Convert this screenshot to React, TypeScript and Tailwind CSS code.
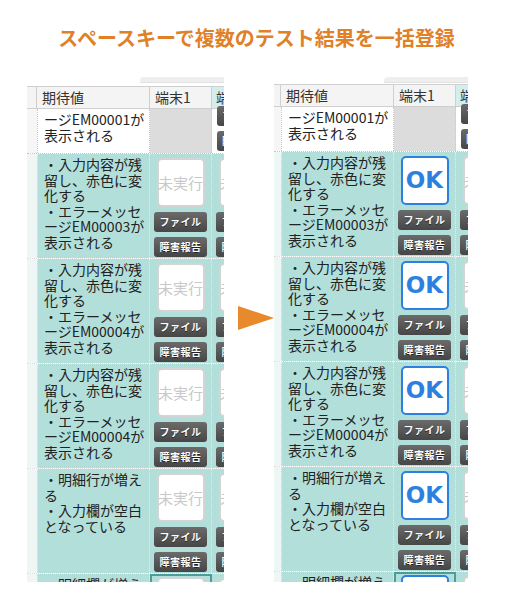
import React from "react";

const rows: string[][] = [
  ["・入力内容が残", "留し、赤色に変", "化する", "・エラーメッセ", "ージEM00003が", "表示される"],
  ["・入力内容が残", "留し、赤色に変", "化する", "・エラーメッセ", "ージEM00004が", "表示される"],
  ["・入力内容が残", "留し、赤色に変", "化する", "・エラーメッセ", "ージEM00004が", "表示される"],
  ["・明細行が増え", "る", "・入力欄が空白", "となっている"],
];

function Btn({ children }: { children: React.ReactNode }) {
  return (
    <div className="w-[53px] h-[20px] shrink-0 rounded-[3px] bg-linear-to-b from-[#6b6b6b] to-[#464646] text-white text-[10px] font-bold flex items-center justify-center leading-none tracking-[0.5px] [text-shadow:0_1px_0_#222]">
      {children}
    </div>
  );
}

function Pending() {
  return (
    <div className="w-[48px] h-[49px] shrink-0 bg-white border-2 border-[#d4d4d4] rounded-[5px] flex items-center justify-center whitespace-nowrap text-[15px] text-[#c9c9c9] leading-none">
      未実行
    </div>
  );
}

function OkBox() {
  return (
    <div className="w-[48px] h-[49px] shrink-0 bg-white border-2 border-[#2d80e0] rounded-[5px] flex items-center justify-center text-[23px] font-bold text-[#2d80e0] leading-none font-['DejaVu_Sans',sans-serif]">
      OK
    </div>
  );
}

function TermCell({ ok }: { ok: boolean }) {
  return (
    <div className="w-[62px] shrink-0 flex flex-col items-center pt-[4px] gap-[5px] border-r border-dotted border-[#e4eeee]">
      {ok ? <OkBox /> : <Pending />}
      <Btn>ファイル</Btn>
      <Btn>障害報告</Btn>
    </div>
  );
}

function Table({ ok }: { ok: boolean }) {
  const narrow = ok ? "w-[7px] shrink-0" : "w-[10px] shrink-0";
  return (
    <div className={ok ? "w-[194px] h-[505px] overflow-hidden shrink-0" : "w-[197px] h-[505px] overflow-hidden shrink-0"}>
      <div className="w-[260px] font-['Noto_Sans_CJK_JP','Noto_Sans',sans-serif]">
        <div className={ok ? "ml-[110px] h-[6px] rounded-tl-[4px] bg-[#eeeeee] border-b border-[#e2e2e2]" : "ml-[113px] h-[6px] rounded-tl-[4px] bg-[#eeeeee] border-b border-[#e2e2e2]"} />
        {/* header */}
        <div className={ok ? "mt-[1px] flex h-[23px] border-y border-[#cfcfcf] bg-[#f4f4f4] text-[14px] text-[#333] leading-[21px]" : "mt-[3px] flex h-[23px] border-y border-[#cfcfcf] bg-[#f4f4f4] text-[14px] text-[#333] leading-[21px]"}>
          <div className={narrow + " border-r border-[#cfcfcf]"} />
          <div className="w-[113px] shrink-0 border-r border-[#cfcfcf] pl-[5px]">期待値</div>
          <div className="w-[62px] shrink-0 border-r border-[#cfcfcf] pl-[5px]">端末1</div>
          <div className="w-[62px] shrink-0 bg-[#d3eeee] pl-[4px]">端末2</div>
        </div>
        {/* row 0 (scrolled) */}
        <div className="flex h-[45px] border-b border-dotted border-[#c4c4c4] text-[14px] leading-[15.5px] text-[#222]">
          <div className={narrow + " bg-[#f6f6f6]"} />
          <div className="w-[113px] shrink-0 bg-white border-x border-dotted border-[#c8c8c8] pl-[6px] pt-[3px]">
            <div className="whitespace-nowrap">ージEM00001が</div>
            <div className="whitespace-nowrap">表示される</div>
          </div>
          <div className="w-[62px] shrink-0 bg-[#dcdcdc] border-r border-dotted border-[#c8c8c8]" />
          <div className="w-[62px] shrink-0 bg-white flex flex-col items-center justify-end gap-[5px] pb-[2px]">
            <Btn>ファイル</Btn>
            <Btn>障害報告</Btn>
          </div>
        </div>
        {rows.map((lines, i) => (
          <div key={i} className="flex h-[105px] border-b border-dotted border-[#dcdcdc] text-[14px] leading-[15.5px] text-[#222]">
            <div className={narrow + " bg-[#eef6f6]"} />
            <div className="w-[113px] shrink-0 bg-[#b3dfdb] border-x border-dotted border-[#e4eeee] pl-[6px] pt-[3px]">
              {lines.map((l, j) => (
                <div key={j} className="whitespace-nowrap">{l}</div>
              ))}
            </div>
            <div className="flex bg-[#b3dfdb]">
              <TermCell ok={ok} />
              <TermCell ok={false} />
            </div>
          </div>
        ))}
        {/* partial last row */}
        <div className="flex h-[105px] text-[14px] leading-[15.5px] text-[#222]">
          <div className={narrow + " bg-[#eef6f6]"} />
          <div className="w-[113px] shrink-0 bg-[#b3dfdb] border-x border-dotted border-[#e4eeee] pl-[6px] pt-[3px]">
            <div className="whitespace-nowrap">・明細欄が増え</div>
            <div className="whitespace-nowrap">る</div>
          </div>
          <div className="flex bg-[#b3dfdb]">
            <div className="w-[62px] shrink-0 flex flex-col items-center pt-[1px] border-2 border-[#4a9d98]">
              {ok ? <OkBox /> : <Pending />}
            </div>
            <TermCell ok={false} />
          </div>
        </div>
      </div>
    </div>
  );
}

export default function App() {
  return (
    <div className="w-[507px] h-[598px] bg-white overflow-hidden">
      <div className="pt-[24px] pl-[6px] h-[77px] text-center text-[20px] leading-[28px] font-bold text-[#e08028] font-['Noto_Sans_CJK_JP','Noto_Sans',sans-serif] whitespace-nowrap">
        スペースキーで複数のテスト結果を一括登録
      </div>
      <div className="flex items-start pl-[27px]">
        <Table ok={false} />
        <div className="ml-[14px] mt-[229px] w-0 h-0 border-y-[12px] border-y-transparent border-l-[36px] border-l-[#e8892b] shrink-0" />
        <Table ok={true} />
      </div>
    </div>
  );
}
